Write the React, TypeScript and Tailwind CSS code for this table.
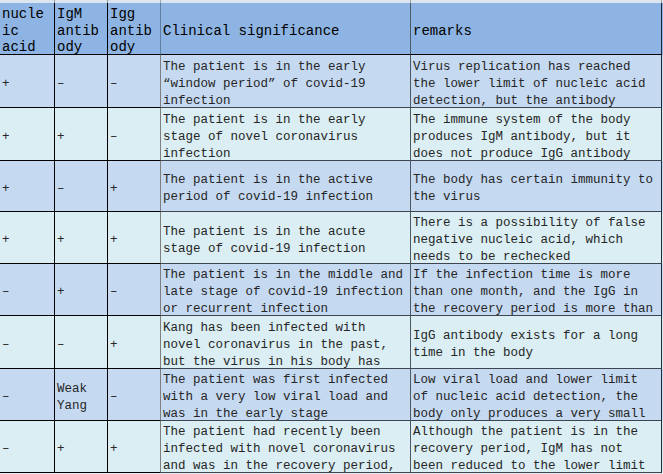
const cols = ["w-[55px]", "w-[53px]", "w-[53px]", "w-[250px]", "w-[251px]"];
const vline = [
  "border-r-black",
  "border-r-black",
  "border-r-[#7f7f7f]",
  "border-r-[#4d5a66]",
  "border-r-[#1f2a36]",
];

type Row = {
  h: string;
  bg: string;
  cells: string[][];
};

const rows: Row[] = [
  {
    h: "h-[53px]",
    bg: "bg-[#c5d9f1]",
    cells: [
      ["+"],
      ["–"],
      ["–"],
      ["The patient is in the early", "\u201cwindow period\u201d of covid-19", "infection"],
      ["Virus replication has reached", "the lower limit of nucleic acid", "detection, but the antibody"],
    ],
  },
  {
    h: "h-[53px]",
    bg: "bg-[#daeef3]",
    cells: [
      ["+"],
      ["+"],
      ["–"],
      ["The patient is in the early", "stage of novel coronavirus", "infection"],
      ["The immune system of the body", "produces IgM antibody, but it", "does not produce IgG antibody"],
    ],
  },
  {
    h: "h-[51px]",
    bg: "bg-[#c5d9f1]",
    cells: [
      ["+"],
      ["–"],
      ["+"],
      ["The patient is in the active", "period of covid-19 infection"],
      ["The body has certain immunity to", "the virus"],
    ],
  },
  {
    h: "h-[52px]",
    bg: "bg-[#daeef3]",
    cells: [
      ["+"],
      ["+"],
      ["+"],
      ["The patient is in the acute", "stage of covid-19 infection"],
      ["There is a possibility of false", "negative nucleic acid, which", "needs to be rechecked"],
    ],
  },
  {
    h: "h-[52px]",
    bg: "bg-[#c5d9f1]",
    cells: [
      ["–"],
      ["+"],
      ["–"],
      ["The patient is in the middle and", "late stage of covid-19 infection", "or recurrent infection"],
      ["If the infection time is more", "than one month, and the IgG in", "the recovery period is more than"],
    ],
  },
  {
    h: "h-[53px]",
    bg: "bg-[#daeef3]",
    cells: [
      ["–"],
      ["–"],
      ["+"],
      ["Kang has been infected with", "novel coronavirus in the past,", "but the virus in his body has"],
      ["IgG antibody exists for a long", "time in the body"],
    ],
  },
  {
    h: "h-[52px]",
    bg: "bg-[#c5d9f1]",
    cells: [
      ["–"],
      ["Weak", "Yang"],
      ["–"],
      ["The patient was first infected", "with a very low viral load and", "was in the early stage"],
      ["Low viral load and lower limit", "of nucleic acid detection, the", "body only produces a very small"],
    ],
  },
  {
    h: "h-[52px]",
    bg: "bg-[#daeef3]",
    cells: [
      ["–"],
      ["+"],
      ["+"],
      ["The patient had recently been", "infected with novel coronavirus", "and was in the recovery period,"],
      ["Although the patient is in the", "recovery period, IgM has not", "been reduced to the lower limit"],
    ],
  },
];

const header = [
  ["nucle", "ic", "acid"],
  ["IgM", "antib", "ody"],
  ["Igg", "antib", "ody"],
  ["Clinical significance"],
  ["remarks"],
];

export default function App() {
  return (
    <div
      className="w-[663px] h-[474px] overflow-hidden bg-[#e4ebf3] text-[#262626]"
      style={{ fontFamily: '"Liberation Mono", "Noto Sans CJK SC", monospace' }}
    >
      {/* sliver of the row above */}
      <div className="flex h-[3px] bg-[#dce6f0]">
        {cols.map((w, i) => (
          <div key={i} className={`${w} border-r ${i < 2 ? "border-r-[#8a96a3]" : "border-r-[#9aa7b4]"}`} />
        ))}
      </div>

      <div className="flex h-[52px] bg-[#8db4e2] text-[14px] leading-[16.5px] text-black">
        {header.map((lines, i) => (
          <div
            key={i}
            className={`${cols[i]} shrink-0 flex flex-col justify-center overflow-hidden pt-[5px] pl-[2px] border-r border-b border-b-black ${
              i < 2 ? "border-r-black" : i === 2 ? "border-r-[#5f7fa3]" : vline[i]
            }`}
          >
            {lines.map((l, j) => (
              <span key={j} className="whitespace-nowrap">
                {l}
              </span>
            ))}
          </div>
        ))}
      </div>

      {rows.map((r, ri) => (
        <div key={ri} className={`flex ${r.h} ${r.bg} text-[12.5px] leading-[17px]`}>
          {r.cells.map((lines, i) => (
            <div
              key={i}
              className={`${cols[i]} shrink-0 flex flex-col justify-center overflow-hidden pt-[6px] pl-[2px] border-r border-b ${vline[i]} ${
                i < 3 ? "border-b-black" : "border-b-[#3d4650]"
              }`}
            >
              {lines.map((l, j) => (
                <span key={j} className="whitespace-nowrap">
                  {l}
                </span>
              ))}
            </div>
          ))}
        </div>
      ))}
    </div>
  );
}
